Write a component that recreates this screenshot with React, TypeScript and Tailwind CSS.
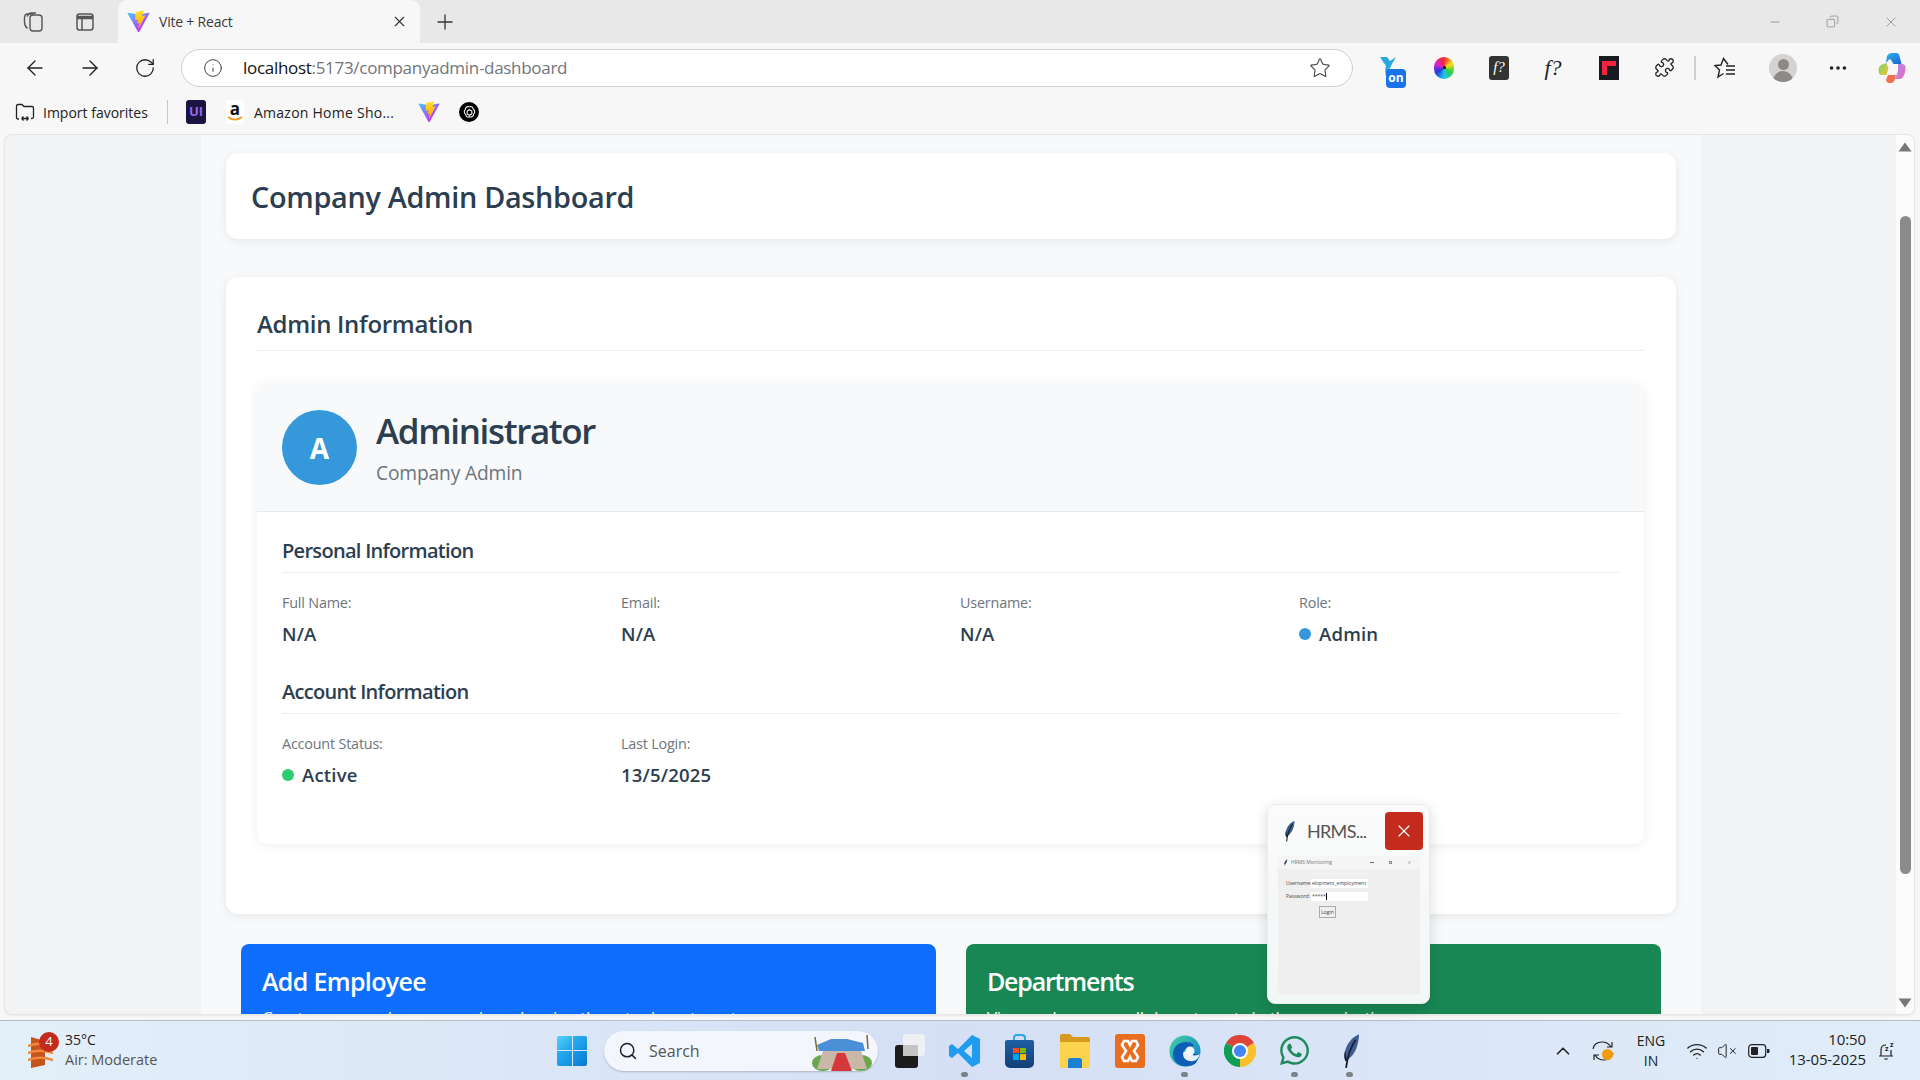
import React from "react";
import { ArrowLeft, ArrowRight, RotateCw, Info, Star, Plus, X, Minus, MoreHorizontal, Search, ChevronUp, Wifi, VolumeX, Puzzle, Copy } from "lucide-react";
import { FaWhatsapp } from "react-icons/fa";

function ViteLogo({ size = 22 }: { size?: number }) {
  return (
    <svg width={size} height={size} viewBox="0 0 410 404">
      <defs>
        <linearGradient id="viteA" x1="6" y1="33" x2="235" y2="344" gradientUnits="userSpaceOnUse">
          <stop stopColor="#41D1FF" />
          <stop offset="1" stopColor="#BD34FE" />
        </linearGradient>
        <linearGradient id="viteB" x1="194" y1="8" x2="236" y2="293" gradientUnits="userSpaceOnUse">
          <stop stopColor="#FFEA83" />
          <stop offset="0.08" stopColor="#FFDD35" />
          <stop offset="1" stopColor="#FFA800" />
        </linearGradient>
      </defs>
      <path fill="url(#viteA)" d="M399.641 59.5246L215.643 388.545C211.844 395.338 202.084 395.378 198.228 388.618L10.5817 59.5563C6.38087 52.1896 12.6802 43.2665 21.0281 44.7586L205.223 77.6824C206.398 77.8924 207.601 77.8904 208.776 77.6763L389.119 44.8058C397.439 43.2894 403.768 52.1434 399.641 59.5246Z" />
      <path fill="url(#viteB)" d="M292.965 1.5744L156.801 28.2552C154.563 28.6937 152.906 30.5903 152.771 32.8664L144.395 174.33C144.198 177.662 147.258 180.248 150.51 179.498L188.42 170.749C191.967 169.931 195.172 173.055 194.443 176.622L183.18 231.775C182.422 235.487 185.907 238.661 189.532 237.56L212.947 230.446C216.577 229.344 220.065 232.527 219.297 236.242L201.398 322.875C200.278 328.294 207.486 331.249 210.492 326.603L212.5 323.5L323.454 102.072C325.312 98.3645 322.108 94.137 318.036 94.9228L279.014 102.454C275.347 103.161 272.227 99.746 273.262 96.1583L298.731 7.86689C299.767 4.27314 296.636 0.855181 292.965 1.5744Z" />
    </svg>
  );
}

function Feather({ size = 30 }: { size?: number }) {
  return (
    <svg width={size} height={size} viewBox="0 0 24 32">
      <path d="M20 1C13 4 7.500 11 7 20c-.1 2 .3 3.500 1 5 5-3 9-8 10.500-14C19.500 7 20 4 20 1z" fill="#3d5f93" />
      <path d="M17 6C13 12 10 19 8.500 31" stroke="#1b1f2a" strokeWidth="1.6" fill="none" />
      <path d="M7 20c-.1 2 .3 3.500 1 5l1.500-1C9 22 8 20 8 15c-.6 1.500-1 3-1 5z" fill="#1b1f2a" />
    </svg>
  );
}

function ToolSlot({ x, children }: { x: number; children: React.ReactNode }) {
  return <div className="flex items-center justify-center shrink-0" style={{ width: x }}>{children}</div>;
}

function TitleBar() {
  return (
    <div className="h-[43px] bg-[#e8e8e8] flex items-end shrink-0">
      <div className="w-[118px] h-[43px] flex items-center shrink-0">
        <div className="w-[21px]" />
        <svg width="24" height="24" viewBox="0 0 24 24" fill="none" stroke="#555" strokeWidth="1.4">
          <rect x="9" y="5" width="12" height="16" rx="3" />
          <path d="M6.500 18.500C4.500 17 3.500 15 3.500 12V8c0-2 1-4 3-4h6" />
          <path d="M6 6.500C7 4.500 8 3 10 3h5" />
        </svg>
        <div className="w-[30px]" />
        <svg width="20" height="20" viewBox="0 0 20 20" fill="none" stroke="#555" strokeWidth="1.5">
          <rect x="2" y="2" width="16" height="16" rx="2.500" />
          <path d="M2 5.500h16" strokeWidth="3.500" />
          <path d="M7 6v12" />
        </svg>
      </div>
      <div className="w-[302px] h-[43px] bg-[#f7f7f7] rounded-t-[9px] flex items-center pl-[9px] pr-[12px] shrink-0">
        <ViteLogo size={23} />
        <span className="ml-[9px] text-[14px] text-[#3a3a3a] flex-1 tracking-[-0.2px]">Vite + React</span>
        <X size={17} strokeWidth={1.6} className="text-[#333]" />
      </div>
      <div className="h-[43px] flex items-center ml-[13px]">
        <Plus size={24} strokeWidth={1.3} className="text-[#333]" />
      </div>
      <div className="flex-1" />
      <div className="h-[43px] flex items-center pr-[21px] gap-[44px] text-[#777]">
        <Minus size={14} strokeWidth={1.2} />
        <Copy size={13} strokeWidth={1.2} className="-scale-x-100" />
        <X size={16} strokeWidth={1} />
      </div>
    </div>
  );
}

function CopilotLogo() {
  return (
    <svg width="28" height="32" viewBox="0 0 28 32">
      <defs>
        <linearGradient id="cpA" x1="0" y1="0" x2="1" y2="1">
          <stop stopColor="#2fb5f0" />
          <stop offset="1" stopColor="#1a5fd0" />
        </linearGradient>
        <linearGradient id="cpB" x1="0" y1="0" x2="1" y2="1">
          <stop stopColor="#b78af0" />
          <stop offset="1" stopColor="#e56ab2" />
        </linearGradient>
        <linearGradient id="cpC" x1="0" y1="0" x2="1" y2="1">
          <stop stopColor="#7ad26a" />
          <stop offset="1" stopColor="#f5c33b" />
        </linearGradient>
      </defs>
      <path d="M9 4c1-2 3-3 5-3h4c2 0 3 1 3.500 3l2 8h-8L13 8c-.5-1-1.500-1-2-.5L8 11z" fill="url(#cpA)" />
      <path d="M20 12h4c2 0 3.500 1.500 3.500 4 0 3-1 7-2.500 9-1 1.500-2.500 2-4 2h-4l3-8z" fill="url(#cpB)" />
      <path d="M8 11L3 13c-1.500 1-2.500 3-2.500 5 0 3 1 5 3 5h5l2-7z" fill="url(#cpC)" />
      <path d="M10 23h8l-1 4c-.5 2-2 4-4 4h-2c-1.500 0-2.500-1-3-3z" fill="#f0704e" />
    </svg>
  );
}

function ToolBar() {
  return (
    <div className="h-[49px] bg-[#f7f7f7] flex items-center shrink-0 overflow-hidden">
      <div className="w-[7px] shrink-0" />
      <ToolSlot x={55}><ArrowLeft size={24} strokeWidth={1.4} className="text-[#222]" /></ToolSlot>
      <ToolSlot x={55}><ArrowRight size={24} strokeWidth={1.4} className="text-[#222]" /></ToolSlot>
      <ToolSlot x={55}><RotateCw size={22} strokeWidth={1.4} className="text-[#222]" /></ToolSlot>
      <div className="w-[9px] shrink-0" />
      <div className="w-[1172px] h-[38px] rounded-full bg-white border border-[#cfcfcf] flex items-center pl-[21px] pr-[21px] shrink-0">
        <Info size={20} strokeWidth={1.2} className="text-[#444]" />
        <span className="ml-[20px] text-[17px] tracking-[-0.3px] flex-1 text-[#70757a] leading-none">
          <span className="text-[#111]">localhost</span>:5173/companyadmin-dashboard
        </span>
        <Star size={22} strokeWidth={1.2} className="text-[#444]" />
      </div>
      <div className="w-[13px] shrink-0" />
      <ToolSlot x={52}>
        <div className="relative w-[28px] h-[28px]">
          <svg width="22" height="24" viewBox="0 0 22 24" className="absolute left-0 top-0">
            <path d="M2 3h7l3 4 6-4-4 7-6 12c-1-4-1-7 0-10z" fill="#29a8e0" />
          </svg>
          <div className="absolute left-[8px] top-[15px] w-[20px] h-[19px] bg-[#1a73e8] rounded-[4px] text-white text-[12px] font-bold flex items-center justify-center">on</div>
        </div>
      </ToolSlot>
      <ToolSlot x={52}>
        <div className="w-[20px] h-[22px] rounded-full bg-[conic-gradient(#ef2b2b,#f5e018,#2fcf3f,#19c8e8,#2237e0,#e01fd0,#ef2b2b)] relative flex items-center justify-center">
          <div className="w-[3px] h-[3px] bg-black rounded-full" />
        </div>
      </ToolSlot>
      <ToolSlot x={58}>
        <div className="w-[20px] h-[24px] bg-[#333] rounded-[3px] text-white text-[15px] italic flex items-center justify-center font-['Liberation_Serif',serif]">f?</div>
      </ToolSlot>
      <ToolSlot x={50}>
        <span className="text-[#222] text-[22px] italic font-['Liberation_Serif',serif] leading-none">f?</span>
      </ToolSlot>
      <ToolSlot x={62}>
        <div className="w-[20px] h-[24px] bg-[#171a21] flex items-center justify-center">
          <svg width="14" height="14" viewBox="0 0 14 14"><path d="M0 0h14v5H5v9H0z" fill="#f5243f" /></svg>
        </div>
      </ToolSlot>
      <ToolSlot x={48}><Puzzle size={21} strokeWidth={1.5} className="text-[#222]" /></ToolSlot>
      <div className="w-[2px] h-[24px] bg-[#cfcfcf] ml-[6px] shrink-0" />
      <ToolSlot x={58}>
        <svg width="24" height="24" viewBox="0 0 24 24" fill="none" stroke="#222" strokeWidth="1.4">
          <path d="M15 8.500L10.500 2.500 8 9l-6 .5 4.500 4.500-1.500 7 5.500-3.500" />
          <path d="M13 10h9M13 14h9M13 18h9" />
        </svg>
      </ToolSlot>
      <ToolSlot x={58}>
        <div className="w-[28px] h-[28px] rounded-full bg-[#d4d3d1] overflow-hidden flex flex-col items-center">
          <div className="w-[11px] h-[13px] rounded-full bg-[#8b8a88] mt-[5px]" />
          <div className="w-[20px] h-[12px] rounded-t-full bg-[#8b8a88] mt-[1px]" />
        </div>
      </ToolSlot>
      <ToolSlot x={52}><MoreHorizontal size={22} strokeWidth={2} className="text-[#222]" /></ToolSlot>
      <ToolSlot x={56}><CopilotLogo /></ToolSlot>
    </div>
  );
}

function BookmarkBar() {
  return (
    <div className="h-[40px] bg-[#f7f7f7] flex items-center text-[14px] text-[#222] shrink-0">
      <div className="w-[15px]" />
      <svg width="20" height="20" viewBox="0 0 20 20" fill="none" stroke="#222" strokeWidth="1.3">
        <path d="M4 17H3c-1 0-1.500-.5-1.500-1.500V4c0-1 .5-1.500 1.500-1.500h4l2 2h8c1 0 1.500.5 1.500 1.500v9c0 1-.5 1.500-1.500 1.500h-1" />
        <path d="M6.500 16.500h7M6.500 16.500l2-2M6.500 16.500l2 2M13.500 16.500l-2-2M13.500 16.500l-2 2" />
      </svg>
      <span className="ml-[8px] w-[107px] whitespace-nowrap">Import favorites</span>
      <div className="w-[1px] h-[24px] bg-[#c8c8c8] ml-[17px]" />
      <div className="ml-[18px] w-[20px] h-[24px] rounded-[3px] bg-[#1b1340] text-[#8e6cf0] text-[13px] font-bold flex items-center justify-center">UI</div>
      <div className="ml-[20px] w-[18px] h-[24px] bg-white flex flex-col items-center justify-center leading-none">
        <span className="text-[#111] text-[17px] font-bold leading-[14px]">a</span>
        <svg width="16" height="6" viewBox="0 0 16 6"><path d="M1 1c4 3.500 10 3.500 14 0" stroke="#f39a1f" strokeWidth="1.8" fill="none" /></svg>
      </div>
      <span className="ml-[10px] w-[149px] whitespace-nowrap tracking-[0.25px]">Amazon Home Sho...</span>
      <div className="ml-[15px]"><ViteLogo size={22} /></div>
      <div className="ml-[19px] w-[20px] h-[20px] rounded-full bg-black flex items-center justify-center">
        <svg width="15" height="15" viewBox="0 0 16 16" fill="none" stroke="#fff" strokeWidth="1.1">
          <path d="M8 2c2-1 4 .5 4 2.500 2 1 2 4 .5 5 0 2.500-2.500 4-4.500 3-2 1-4-.5-4-2.500-2-1-2-4-.5-5C3.500 2.500 6 1 8 2z" />
          <path d="M8 5l2.500 1.500v3L8 11 5.500 9.500v-3z" />
        </svg>
      </div>
    </div>
  );
}

function Field({ label, value, dot }: { label: string; value: string; dot?: string }) {
  return (
    <div>
      <div className="text-[14.4px] leading-[20px] text-[#6c757d] tracking-[-0.2px]">{label}</div>
      <div className="mt-[9px] flex items-center gap-[8px] text-[18.5px] leading-[24px] font-semibold text-[#2c3e50] tracking-[0.2px]">
        {dot === "blue" && <span className="w-[12px] h-[12px] rounded-full bg-[#3498db]" />}
        {dot === "green" && <span className="w-[12px] h-[12px] rounded-full bg-[#2ecc71]" />}
        {value}
      </div>
    </div>
  );
}

function SectionTitle({ children }: { children: React.ReactNode }) {
  return (
    <h4 className="text-[20px] leading-[27px] font-semibold text-[#2c3e50] pb-[8px] border-b border-[#e9ecef] tracking-[-0.7px]">
      {children}
    </h4>
  );
}

function Dashboard() {
  return (
    <div className="w-[1500px] h-full bg-[#f8f9fa] px-[25px] pt-[18px] overflow-hidden shrink-0">
      <div className="h-[86px] bg-white rounded-[12px] shadow-[0_2px_10px_rgba(0,0,0,0.08)] flex items-center px-[25px] pt-[2px]">
        <h1 className="text-[28.8px] font-semibold text-[#2c3e50] tracking-[-0.3px]">Company Admin Dashboard</h1>
      </div>
      <div className="mt-[38px] h-[637px] bg-white rounded-[12px] shadow-[0_2px_10px_rgba(0,0,0,0.08)] pl-[31px] pr-[32px] pt-[30px]">
        <h2 className="text-[24px] leading-[33px] pb-[10px] font-semibold text-[#2c3e50] border-b border-[#e9ecef] tracking-[-0.3px]">Admin Information</h2>
        <div className="mt-[32px] h-[461px] rounded-[10px] bg-white shadow-[0_2px_12px_rgba(0,0,0,0.07)] overflow-hidden">
          <div className="h-[129px] bg-[#f8f9fa] border-b border-[#e9ecef] flex items-center px-[25px] gap-[19px]">
            <div className="w-[75px] h-[75px] rounded-full bg-[#3498db] text-white text-[28px] font-bold flex items-center justify-center pt-[2px]">A</div>
            <div>
              <div className="text-[35px] leading-[44px] font-semibold text-[#2c3e50] tracking-[-1.35px]">Administrator</div>
              <div className="mt-[7px] text-[19.2px] leading-[26px] text-[#6c757d] tracking-[-0.15px]">Company Admin</div>
            </div>
          </div>
          <div className="px-[25px] pt-[25px]">
            <SectionTitle>Personal Information</SectionTitle>
            <div className="grid grid-cols-[repeat(4,339px)] mt-[20px]">
              <Field label="Full Name:" value="N/A" />
              <Field label="Email:" value="N/A" />
              <Field label="Username:" value="N/A" />
              <Field label="Role:" value="Admin" dot="blue" />
            </div>
            <div className="mt-[32px]">
              <SectionTitle>Account Information</SectionTitle>
            </div>
            <div className="grid grid-cols-[repeat(4,339px)] mt-[20px]">
              <Field label="Account Status:" value="Active" dot="green" />
              <Field label="Last Login:" value="13/5/2025" />
            </div>
          </div>
        </div>
      </div>
      <div className="mt-[30px] mx-[15px] flex gap-[30px]">
        <div className="flex-1 h-[160px] rounded-[8px] bg-[#0d6efd] text-white px-[21px] pt-[19px]">
          <h3 className="text-[25px] leading-[36px] font-semibold tracking-[-0.67px]">Add Employee</h3>
          <p className="mt-[6px] text-[17px] tracking-[-0.3px]">Create new employee records and assign them to departments</p>
        </div>
        <div className="flex-1 h-[160px] rounded-[8px] bg-[#198754] text-white px-[21px] pt-[19px]">
          <h3 className="text-[25px] leading-[36px] font-semibold tracking-[-1.2px]">Departments</h3>
          <p className="mt-[6px] text-[17px] tracking-[-0.3px]">View and manage all departments in the organization</p>
        </div>
      </div>
    </div>
  );
}

function Scrollbar() {
  return (
    <div className="w-[18px] h-full bg-[#fbfbfb] flex flex-col items-center shrink-0">
      <svg width="14" height="10" viewBox="0 0 14 10" className="mt-[7px]"><path d="M7 0.500L13.500 9.500H0.500z" fill="#777" /></svg>
      <div className="w-[11px] h-[658px] rounded-full bg-[#8b8b8b] mt-[64px]" />
      <div className="flex-1" />
      <svg width="14" height="10" viewBox="0 0 14 10" className="mb-[6px]"><path d="M7 9.500L13.500 0.500H0.500z" fill="#777" /></svg>
    </div>
  );
}

function PagePreview() {
  return (
    <div className="absolute left-[1267px] top-[804px] w-[163px] h-[200px] rounded-[8px] bg-gradient-to-b from-[#fbfbfb] to-[#f1f6f6] border border-[#ececec] shadow-[0_4px_14px_rgba(0,0,0,0.15)] px-[10px] pt-[7px]">
      <div className="flex items-center h-[38px]">
        <Feather size={22} />
        <span className="ml-[7px] text-[18px] text-[#555] flex-1 tracking-[-0.7px] font-['Lato',sans-serif]">HRMS...</span>
        <div className="w-[38px] h-[38px] rounded-[4px] bg-[#c42b1c] flex items-center justify-center -mr-[4px] shrink-0">
          <X size={20} strokeWidth={1.4} className="text-white" />
        </div>
      </div>
      <div className="mt-[6px] w-[142px] h-[138px] bg-[#efefef] text-[5px] text-[#444] leading-none">
        <div className="h-[13px] bg-[#f5f5f5] flex items-center pl-[4px] pr-[8px] text-[#777]">
          <Feather size={7} />
          <span className="ml-[2px] flex-1">HRMS Monitoring</span>
          <span className="w-[4px] h-[1px] bg-[#666] mr-[15px]" />
          <span className="w-[3px] h-[3px] border-[0.5px] border-[#888] mr-[15px]" />
          <X size={5} />
        </div>
        <div className="flex items-center mt-[10px] pl-[8px]">
          <span className="w-[25px]">Username:</span>
          <span className="w-[57px] h-[9px] bg-white flex items-center pl-[1px]">elopment_employment</span>
        </div>
        <div className="flex items-center mt-[4px] pl-[8px]">
          <span className="w-[25px]">Password:</span>
          <span className="w-[57px] h-[9px] bg-white flex items-center pl-[1px]">*****<span className="w-[1px] h-[7px] bg-black" /></span>
        </div>
        <div className="ml-[41px] mt-[5px] w-[17px] h-[12px] border border-[#aaa] flex items-center justify-center">Login</div>
      </div>
    </div>
  );
}

function TaskIcon({ active, children }: { active?: boolean; children: React.ReactNode }) {
  return (
    <div className="w-[55px] h-[60px] relative flex items-center justify-center shrink-0">
      {children}
      {active && <span className="absolute left-[24px] bottom-[4px] w-[7px] h-[5px] rounded-full bg-[#7d8288]" />}
    </div>
  );
}

function WinLogo() {
  return (
    <div className="grid grid-cols-2 gap-[1px] w-[30px] h-[30px] rounded-[2px] overflow-hidden">
      <div className="bg-gradient-to-br from-[#52d4fb] to-[#1a9fe8]" />
      <div className="bg-gradient-to-br from-[#2eb4f2] to-[#0f8de0]" />
      <div className="bg-gradient-to-br from-[#2aaef0] to-[#0f8fe0]" />
      <div className="bg-gradient-to-br from-[#1c9bea] to-[#0878cf]" />
    </div>
  );
}

function Taskbar() {
  return (
    <div className="h-[60px] border-t border-[#b5bcc6] bg-gradient-to-r from-[#e3eff9] via-[#d5dff5] to-[#e1edf9] flex items-center shrink-0 text-[14px] text-[#222]">
      <div className="w-[28px]" />
      <div className="relative w-[25px] h-[36px] shrink-0">
        <svg width="25" height="36" viewBox="0 0 25 36">
          <path d="M3 4l14 4v24L3 35z" fill="#c4541c" />
          <path d="M0 13c8-3 16-3 25 0M0 20c8-3 16-3 25 0M0 27c8-3 16-3 25 0" stroke="#f0873c" strokeWidth="2.500" fill="none" />
        </svg>
        <div className="absolute left-[11px] -top-[1px] w-[20px] h-[20px] rounded-full bg-[#c42b1c] text-white text-[13px] flex items-center justify-center">4</div>
      </div>
      <div className="ml-[12px] w-[93px] shrink-0 leading-[20px] pb-[2px]">
        <div>35°C</div>
        <div className="text-[#555] text-[14.5px]">Air: Moderate</div>
      </div>
      <div className="w-[399px]" />
      <WinLogo />
      <div className="w-[17px]" />
      <div className="w-[274px] h-[40px] rounded-full bg-[#f3f6fd] shadow-[0_1px_2px_rgba(0,0,0,0.2)] flex items-center pl-[14px] pr-[5px] shrink-0">
        <Search size={20} strokeWidth={1.8} className="text-[#222]" />
        <span className="ml-[11px] text-[16px] text-[#555] flex-1">Search</span>
        <svg width="62" height="40" viewBox="0 0 62 40">
          <ellipse cx="12" cy="32" rx="11" ry="8" fill="#6aa84f" />
          <ellipse cx="50" cy="32" rx="11" ry="8" fill="#6aa84f" />
          <path d="M6 14l14-6 16 0 16 4 2 8H8z" fill="#4a90d9" />
          <path d="M12 20h38l6 18H6z" fill="#c9b8a8" />
          <path d="M26 22h8l7 18H20z" fill="#d4383a" />
          <path d="M4 6l2 14M56 4l1 14" stroke="#7a6a30" strokeWidth="1.500" />
        </svg>
      </div>
      <div className="w-[4px]" />
      <TaskIcon>
        <div className="relative w-[30px] h-[34px]">
          <div className="absolute left-0 top-[11px] w-[23px] h-[23px] rounded-[3px] bg-[#1c1c1c]" />
          <div className="absolute left-[8px] top-0 w-[22px] h-[22px] rounded-[3px] bg-[#f1f2f4]/90" />
          <div className="absolute left-[8px] top-[11px] w-[15px] h-[11px] bg-[#c4c4c4]" />
        </div>
      </TaskIcon>
      <TaskIcon active>
        <svg width="32" height="34" viewBox="0 0 32 34">
          <path d="M23 1l8 4v24l-8 4L9 19l-6 5-3-2v-10l3-2 6 5zM23 10l-8 7 8 7z" fill="#1f9cf0" fillRule="evenodd" />
        </svg>
      </TaskIcon>
      <TaskIcon>
        <div className="relative w-[29px] h-[34px]">
          <div className="absolute left-[8px] top-0 w-[13px] h-[8px] rounded-t-[4px] border-[2px] border-[#2aa7ea] border-b-0" />
          <div className="absolute left-0 top-[6px] w-[29px] h-[28px] rounded-b-[5px] rounded-t-[2px] bg-gradient-to-b from-[#1f5fa3] to-[#123f78] grid grid-cols-2 gap-[1px] px-[8px] py-[8px]">
            <span className="bg-[#f25022]" />
            <span className="bg-[#7fba00]" />
            <span className="bg-[#00a4ef]" />
            <span className="bg-[#ffb900]" />
          </div>
        </div>
      </TaskIcon>
      <TaskIcon>
        <svg width="30" height="34" viewBox="0 0 30 34">
          <path d="M0 2c0-1 .5-2 2-2h8l3 3h15c1 0 2 1 2 2v4H0z" fill="#d89a1e" />
          <path d="M0 8h30v24c0 1-1 2-2 2H2c-1 0-2-1-2-2z" fill="#fcd34d" />
          <path d="M8 26c0-1 1-2 2-2h10c1 0 2 1 2 2v8H8z" fill="#1b7fd4" />
        </svg>
      </TaskIcon>
      <TaskIcon>
        <div className="w-[30px] h-[34px] rounded-[3px] bg-[#e86d1f] flex items-center justify-center">
          <svg width="20" height="24" viewBox="0 0 20 24" fill="none" stroke="#fff" strokeWidth="2.600">
            <path d="M4 2h4l2 4 2-4h4l2 4-4 6 4 6-2 4h-4l-2-4-2 4H4l-2-4 4-6-4-6z" />
          </svg>
        </div>
      </TaskIcon>
      <TaskIcon active>
        <svg width="32" height="34" viewBox="0 0 32 34">
          <defs>
            <linearGradient id="edgeA" x1="0" y1="0" x2="1" y2="1">
              <stop stopColor="#43d3a0" />
              <stop offset="1" stopColor="#0f78d4" />
            </linearGradient>
          </defs>
          <circle cx="16" cy="17" r="15.500" fill="url(#edgeA)" />
          <path d="M31 20H14c0-4 3-6 6-6 3.500 0 5-1.500 4-4C20 7 12 7 7 12c-4 5-4 11 0 16 5 5 14 6 20 1l4-9z" fill="#0d5cb8" />
          <path d="M14 20c0 5 5 8 10 7 3-.5 5-2 7-7-2 1-5 2-8 1-3 0-5-1-5-4-2 0-4 1-4 3z" fill="#fff" opacity="0.9" />
          <circle cx="21" cy="17" r="4.500" fill="#f3f6fd" />
        </svg>
      </TaskIcon>
      <TaskIcon>
        <svg width="32" height="32" viewBox="0 0 32 32">
          <path d="M16 16L29.900 8A16 16 0 0 0 2.100 8z" fill="#db4437" />
          <path d="M16 16L2.100 8A16 16 0 0 0 16 32z" fill="#0f9d58" />
          <path d="M16 16L16 32A16 16 0 0 0 29.900 8z" fill="#fbc02d" />
          <circle cx="16" cy="16" r="8" fill="#fff" />
          <circle cx="16" cy="16" r="6" fill="#4285f4" />
        </svg>
      </TaskIcon>
      <TaskIcon active>
        <FaWhatsapp size={33} className="text-[#1f8a5c]" />
      </TaskIcon>
      <TaskIcon active>
        <Feather size={36} />
      </TaskIcon>
      <div className="w-[175px]" />
      <ChevronUp size={22} strokeWidth={1.8} className="text-[#222]" />
      <div className="w-[17px]" />
      <div className="relative w-[24px] h-[24px]">
        <svg width="24" height="24" viewBox="0 0 24 24" fill="none" stroke="#222" strokeWidth="1.200">
          <path d="M2 10C3 5 7 3 11 3c4 0 7 1.500 9 5M21 3v5h-5" />
          <path d="M22 14c-1 5-5 7-9 7-4 0-7-1.500-9-5M3 21v-5h5" />
        </svg>
        <span className="absolute left-[11px] top-[10px] w-[11px] h-[11px] rounded-full bg-[#f59b0b]" />
      </div>
      <div className="w-[48px] ml-[12px] text-center leading-[20px] text-[14px] shrink-0">
        <div>ENG</div>
        <div>IN</div>
      </div>
      <div className="w-[11px]" />
      <Wifi size={22} strokeWidth={1.5} className="text-[#222]" />
      <div className="w-[9px]" />
      <VolumeX size={20} strokeWidth={1.2} className="text-[#222]" />
      <div className="w-[11px]" />
      <svg width="22" height="14" viewBox="0 0 22 14" fill="none">
        <rect x="0.700" y="0.700" width="17" height="12.600" rx="3" stroke="#222" strokeWidth="1.200" />
        <rect x="3" y="3" width="7" height="8" rx="1" fill="#222" />
        <path d="M19 5h1.500c.5 0 1 .5 1 1v2c0 .5-.5 1-1 1H19z" fill="#222" />
      </svg>
      <div className="w-[91px] ml-[5px] pb-[4px] text-right leading-[20px] text-[15px] tracking-[-0.1px] shrink-0 whitespace-nowrap flex flex-col items-end">
        <div>10:50</div>
        <div>13-05-2025</div>
      </div>
      <div className="ml-[12px]">
        <svg width="18" height="20" viewBox="0 0 18 20" fill="none" stroke="#222" strokeWidth="1.200">
          <path d="M3 15V9c0-3 2-5 5-5M1 15h14M6.500 17.500c.5 1 2.500 1 3 0M13 9v6" />
          <text x="7" y="10" fontSize="7" fill="#222" stroke="none" fontWeight="700">z</text>
          <text x="12" y="6" fontSize="7" fill="#222" stroke="none" fontWeight="700">z</text>
        </svg>
      </div>
    </div>
  );
}

export default function App() {
  return (
    <div className="relative w-[1920px] h-[1080px] overflow-hidden bg-[#f7f7f7] flex flex-col font-['Open_Sans',sans-serif]">
      <TitleBar />
      <ToolBar />
      <BookmarkBar />
      <div className="mt-[2px] ml-[4px] w-[1911px] h-[881px] rounded-[8px] border border-[#e6e6e6] shadow-[0_1px_2px_rgba(0,0,0,0.06)] bg-[#f2f3f5] flex overflow-hidden shrink-0">
        <div className="w-[196px] shrink-0" />
        <Dashboard />
        <div className="w-[195px] shrink-0" />
        <Scrollbar />
      </div>
      <div className="h-[5px] shrink-0" />
      <Taskbar />
      <PagePreview />
    </div>
  );
}
